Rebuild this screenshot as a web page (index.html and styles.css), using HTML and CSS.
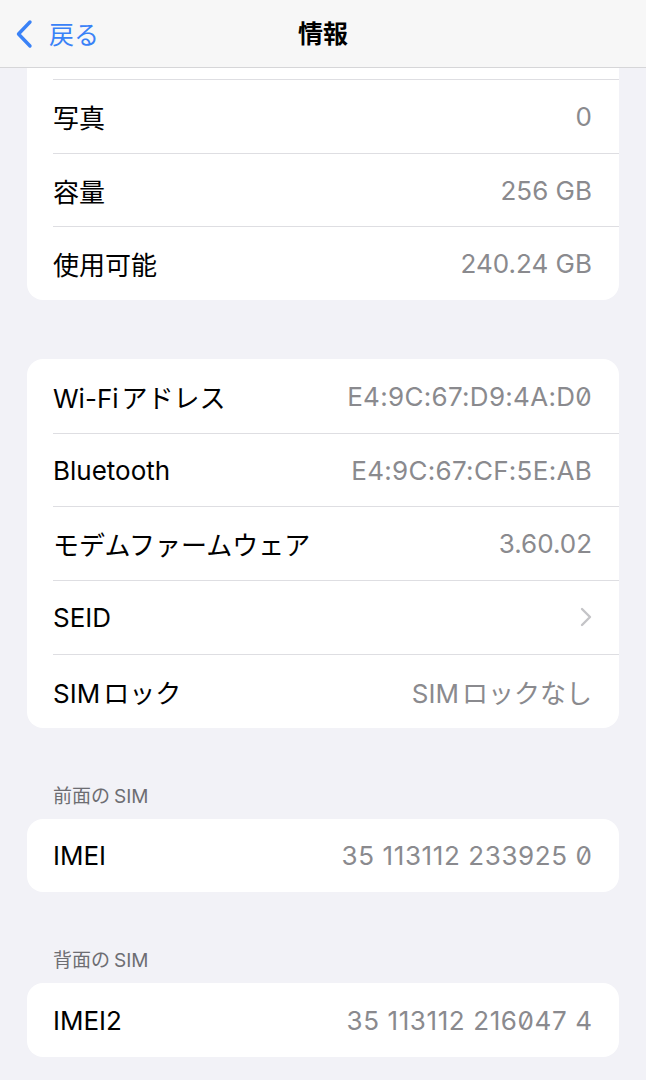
FILE: index.html
```html
<!DOCTYPE html>
<html lang="ja">
<head>
<meta charset="utf-8">
<link rel="stylesheet" href="styles.css">
</head>
<body>
<header class="nav">
  <div class="back">
    <svg class="chev" width="20" height="32" viewBox="0 0 20 32"><path d="M16 4 L4.5 16 L16 28" fill="none" stroke="#3a82f7" stroke-width="3.4" stroke-linecap="round" stroke-linejoin="round"/></svg>
    <span class="back-label">戻る</span>
  </div>
  <div class="title">情報</div>
</header>
<main class="content">
  <section class="card card-top">
    <div class="row partial"></div>
    <div class="row"><span class="label">写真</span><span class="value">0</span></div>
    <div class="row"><span class="label">容量</span><span class="value">256 GB</span></div>
    <div class="row"><span class="label">使用可能</span><span class="value">240.24 GB</span></div>
  </section>

  <section class="card gap">
    <div class="row"><span class="label">Wi-Fi<span class="jp">アドレス</span></span><span class="value mono">E4:9C:67:D9:4A:D0</span></div>
    <div class="row"><span class="label">Bluetooth</span><span class="value mono">E4:9C:67:CF:5E:AB</span></div>
    <div class="row"><span class="label">モデムファームウェア</span><span class="value">3.60.02</span></div>
    <div class="row"><span class="label">SEID</span><svg class="disc" width="14" height="22" viewBox="0 0 14 22"><path d="M3 3 L11 11 L3 19" fill="none" stroke="#c4c4c7" stroke-width="2.4" stroke-linecap="round" stroke-linejoin="round"/></svg></div>
    <div class="row"><span class="label">SIM<span class="jp">ロック</span></span><span class="value">SIM<span class="jp">ロックなし</span></span></div>
  </section>

  <div class="group-head">前面の<span class="lat">SIM</span></div>
  <section class="card">
    <div class="row"><span class="label">IMEI</span><span class="value slz">35 113112 233925 0</span></div>
  </section>

  <div class="group-head">背面の<span class="lat">SIM</span></div>
  <section class="card">
    <div class="row"><span class="label">IMEI2</span><span class="value slz">35 113112 216047 4</span></div>
  </section>
</main>
</body>
</html>
```
FILE: styles.css
```css
* { box-sizing: border-box; }
html, body { margin: 0; padding: 0; }
body {
  background: #f2f2f7;
  font-family: Inter, "Noto Sans CJK JP", sans-serif;
  color: #000;
  width: 646px;
  height: 1080px;
  overflow: hidden;
}
.nav {
  height: 68px;
  background: #f7f7f7;
  border-bottom: 1px solid #d6d6d8;
  display: flex;
  align-items: center;
  justify-content: center;
  position: relative;
}
.back {
  position: absolute;
  left: 14px;
  top: 0;
  height: 67px;
  display: flex;
  align-items: center;
  gap: 15px;
  color: #3a82f7;
}
.chev { display: block; }
.back-label {
  font-family: "Noto Sans CJK JP", sans-serif;
  font-size: 25px;
  line-height: 1;
  margin-top: -1px;
}
.title {
  font-family: "Noto Sans CJK JP", sans-serif;
  font-weight: 700;
  font-size: 25px;
  line-height: 1;
  margin-top: -3px;
}
.content {
  padding: 0 27px;
}
.card {
  background: #fff;
  border-radius: 16px;
  overflow: hidden;
}
.card-top {
  border-top-left-radius: 0;
  border-top-right-radius: 0;
}
.card.gap { margin-top: 59px; }
.row {
  height: 73.7px;
  display: flex;
  align-items: center;
  justify-content: space-between;
  padding: 0 27px 0 26px;
  position: relative;
  font-size: 26px;
}
.row + .row::before {
  content: "";
  position: absolute;
  left: 26px;
  right: 0;
  top: 0;
  height: 1px;
  background: #dedee2;
}
.row.partial { height: 11px; }
.label {
  color: #000;
  margin-top: 1px;
}
.value {
  color: #8a8a8e;
  margin-top: 1px;
}
.jp { margin-left: 3px; }
.mono, .slz {
  font-variant-numeric: slashed-zero;
  font-feature-settings: "zero" 1;
}
.mono { letter-spacing: 0.3px; }
.slz { letter-spacing: 0.6px; margin-right: -0.6px; }
.disc { display: block; margin-right: -1px; }
.group-head {
  padding: 55px 0 9px 26px;
  font-size: 19px;
  line-height: 27px;
  color: #6d6d72;
}
.lat { margin-left: 4px; }
```
